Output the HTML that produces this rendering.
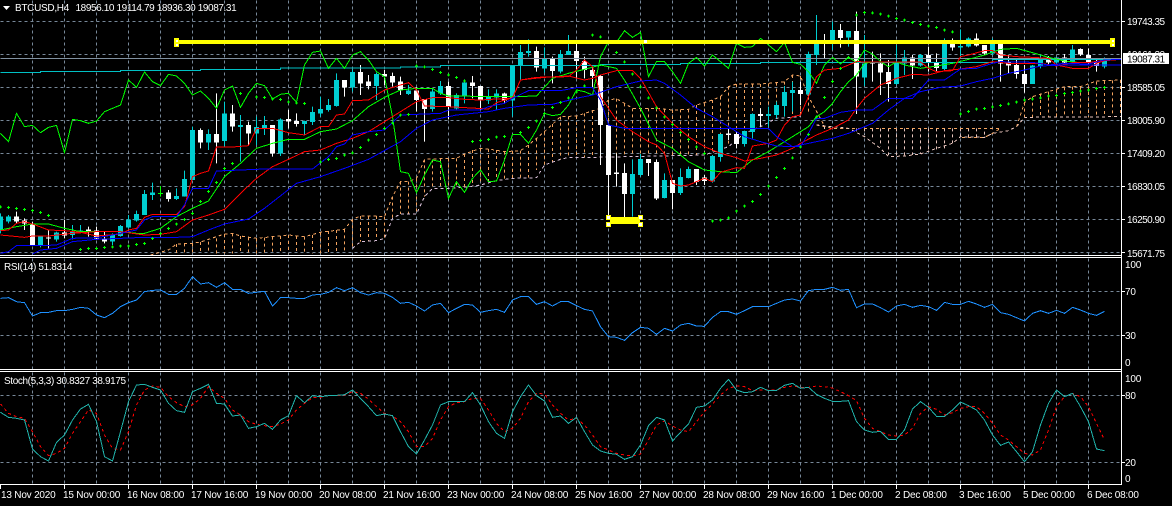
<!DOCTYPE html>
<html><head><meta charset="utf-8"><style>
html,body{margin:0;padding:0;background:#000;width:1172px;height:506px;overflow:hidden}
svg{display:block}
text{font-family:"Liberation Sans",sans-serif;font-size:10px;fill:#fff;letter-spacing:-.2px}
.l{fill:none;stroke-width:1;vector-effect:non-scaling-stroke;stroke-linejoin:miter;shape-rendering:crispEdges}
.c{shape-rendering:crispEdges}
path.c{fill:none}
.p text{letter-spacing:-.52px}
</style></head><body>
<svg width="1172" height="506" viewBox="0 0 1172 506" xmlns="http://www.w3.org/2000/svg">
<rect width="1172" height="506" fill="#000"/>
<!-- grid -->
<g class="c" fill="none" stroke="#778899" stroke-dasharray="3 3" transform="translate(.5,.5)">
<path d="M32 0V255M64 0V255M96 0V255M128 0V255M160 0V255M192 0V255M224 0V255M256 0V255M288 0V255M320 0V255M352 0V255M384 0V255M416 0V255M448 0V255M480 0V255M512 0V255M544 0V255M576 0V255M608 0V255M640 0V255M672 0V255M704 0V255M736 0V255M768 0V255M800 0V255M832 0V255M864 0V255M896 0V255M928 0V255M960 0V255M992 0V255M1024 0V255M1056 0V255M1088 0V255"/>
<path d="M32 258V369M64 258V369M96 258V369M128 258V369M160 258V369M192 258V369M224 258V369M256 258V369M288 258V369M320 258V369M352 258V369M384 258V369M416 258V369M448 258V369M480 258V369M512 258V369M544 258V369M576 258V369M608 258V369M640 258V369M672 258V369M704 258V369M736 258V369M768 258V369M800 258V369M832 258V369M864 258V369M896 258V369M928 258V369M960 258V369M992 258V369M1024 258V369M1056 258V369M1088 258V369"/>
<path d="M32 372V484M64 372V484M96 372V484M128 372V484M160 372V484M192 372V484M224 372V484M256 372V484M288 372V484M320 372V484M352 372V484M384 372V484M416 372V484M448 372V484M480 372V484M512 372V484M544 372V484M576 372V484M608 372V484M640 372V484M672 372V484M704 372V484M736 372V484M768 372V484M800 372V484M832 372V484M864 372V484M896 372V484M928 372V484M960 372V484M992 372V484M1024 372V484M1056 372V484M1088 372V484"/>
<path d="M0 21H1121M0 54H1121M0 87H1121M0 120H1121M0 153H1121M0 186H1121M0 219H1121M0 252H1121M0 291H1121M0 335H1121M0 395H1121M0 462H1121"/>
</g>
<svg x="0" y="0" width="1121" height="255" viewBox="0 0 1121 255" style="overflow:hidden">
<g transform="translate(.5,0) scale(1,.33333)">
<!-- cloud verticals -->
<path class="c" stroke="#f4a460" stroke-width="1" stroke-dasharray="9 9" d="M176 732V760M184 730V760M192 730V760M200 726V760M208 725V760M216 715V760M224 702V760M232 700V760M240 708V760M248 712V760M256 715V760M264 713V760M272 710V760M280 708V760M288 705V760M296 708V760M304 710V760M312 705V760M320 697V760M328 693V760M336 690V760M344 688V760M352 658V745M360 648V725M368 648V724M376 648V722M384 650V715M392 590V655M400 545V642M408 545V642M416 535V642M424 478V590M432 478V565M440 477V565M448 476V565M456 475V564M464 462V562M472 450V555M480 445V552M488 447V545M496 450V540M504 455V536M512 453V535M520 452V533M528 435V533M536 415V510M544 395V495M552 372V487M560 350V478M568 349V472M576 348V472M584 340V472M592 330V472M600 325V472M608 300V472M616 296V471M624 310V470M632 325V470M640 325V468M648 325V468M656 325V468M664 328V467M672 330V467M680 328V466M688 328V465M696 315V465M704 310V465M712 300V455M720 290V450M728 260V440M736 252V400M744 252V390M752 252V380M760 252V372M768 250V365M776 248V355M784 245V352M792 225V352M800 228V350M808 290V340M1024 308V352M1032 290V352M1040 282V352M1048 275V352M1056 268V352M1064 262V352M1072 260V352M1080 260V352M1088 258V352M1096 245V352M1104 243V352M1112 241V350M1120 240V350"/>
<path class="c" stroke="#e8c4bc" stroke-width="1" stroke-dasharray="9 9" d="M824 378V387M856 385V395M864 385V405M872 385V420M880 385V440M888 385V465M896 385V470M904 385V470M912 385V465M920 385V462M928 385V455M936 385V448M944 385V445M952 385V430M960 385V412M968 385V412M976 385V412M984 395V412"/>
<!-- cloud spans -->
<polyline class="l" stroke="#f4a460" stroke-dasharray="3 3" points="150,765 168,750 176,732 192,730 200,726 224,702 232,700 240,708 256,715 272,710 288,705 304,710 320,697 344,688 352,658 360,648 376,648 384,650 392,590 400,545 408,545 416,535 424,478 448,475 456,475 464,462 480,445 488,447 504,455 520,452 528,435 544,395 560,350 576,348 600,325 608,300 616,296 624,310 632,325 656,325 672,330 688,328 696,315 712,300 720,290 728,260 736,252 760,252 776,248 784,245 792,225 800,228 808,290 824,378"/>
<polyline class="l" stroke="#d8bfd8" stroke-dasharray="3 3" points="352,745 360,725 376,722 384,715 392,655 400,642 416,642 424,590 432,565 448,565 464,562 480,555 496,542 512,535 536,533 544,495 560,478 568,472 592,472 624,470 704,465 728,440 744,400 760,380 776,355 800,350"/>
<polyline class="l" stroke="#f4a460" stroke-dasharray="3 3" points="816,375 832,385 1000,385 992,400 984,412 960,412"/>
<polyline class="l" stroke="#e8c4bc" stroke-dasharray="3 3" points="816,375 848,385 864,410 880,445 888,470 904,468 920,462 936,445 952,430 960,410 984,412 992,400 1008,392 1016,380 1024,352 1121,350"/>
<polyline class="l" stroke="#f4a460" stroke-dasharray="3 3" points="1016,380 1024,308 1032,290 1048,275 1064,260 1080,260 1096,243 1121,240"/>
<!-- wicks -->
<path class="c" stroke="#00ced1" stroke-width="1" d="M0 640V700M8 645V670M40 710V742M56 695V725M72 675V718M80 675V700M112 700V735M120 675V710M128 645V685M136 632V665M144 570V645M152 548V600M176 565V600M184 512V590M192 380V540M208 388V450M224 305V440M240 345V485M256 350V435M264 348V405M280 355V468M304 362V405M312 320V375M320 290V350M328 297V335M336 220V320M352 208V275M376 218V300M408 255V285M432 265V335M440 243V285M456 280V328M464 238V310M488 268V312M496 268V328M512 195V350M520 135V240M528 118V170M544 142V218M560 150V220M568 105V165M632 478V650M640 462V530M664 520V595M680 505V585M688 500V535M712 465V548M720 402V485M744 392V440M752 340V415M768 320V380M776 305V355M784 258V350M792 245V335M808 155V285M816 45V195M832 65V150M848 93V140M864 105V258M896 135V255M904 150V225M920 162V200M944 115V210M960 88V175M968 112V142M992 115V165M1032 195V252M1040 165V205M1056 172V195M1072 135V190M1104 172V205"/>
<path class="c" stroke="#fff" stroke-width="1" d="M16 635V670M24 655V690M32 665V735M48 690V745M64 660V715M88 680V710M96 680V720M104 695V730M168 570V605M200 385V445M216 280V490M232 315V395M248 365V435M272 375V470M288 330V385M296 340V380M344 240V290M360 195V285M368 225V268M384 210V255M392 218V260M400 230V285M416 262V335M424 297V425M448 245V358M472 228V295M480 258V328M504 278V308M536 140V215M552 170V250M576 125V235M584 170V235M592 200V262M600 225V495M608 375V650M616 460V560M624 490V662M648 477V528M656 478V600M672 540V628M696 507V555M704 525V555M728 385V420M736 395V445M760 325V380M800 245V315M824 102V175M840 72V143M856 35V342M872 155V245M880 160V285M888 180V305M912 165V237M928 140V215M936 160V215M952 115V152M976 100V140M984 135V165M1000 127V245M1008 165V222M1016 180V236M1024 195V278M1048 168V198M1064 162V190M1080 145V168M1088 145V195M1096 180V215"/>
<path d="M160 558V590" stroke="#00ff00" stroke-width="1" class="c"/>
<!-- bodies -->
<path class="c" stroke="#00ced1" stroke-width="5" d="M0 650V690M8 650V665M40 710V735M56 698V718M72 695V705M80 692V698M112 705V725M120 678V708M128 658V682M136 642V662M144 582V645M152 578V585M176 588V597M184 537V590M192 390V540M208 402V427M224 340V423M240 375V381M256 381V400M264 375V384M280 358V460M304 363V372M312 336V366M320 327V340M328 315V330M336 240V318M352 216V262M376 222V258M408 272V282M432 275V327M440 258V280M456 285V325M464 248V288M488 290V302M496 280V292M512 195V302M520 156V195M528 153V159M544 175V205M560 162V215M568 153V165M632 522V582M640 477V525M664 540V594M680 531V579M688 507V534M712 468V545M720 402V471M744 393V432M752 342V396M768 342V348M776 315V345M784 276V318M792 270V279M808 162V283M816 125V165M832 90V130M848 93V112M864 190V232M896 187V252M904 172V190M920 165V196M944 130V207M960 138V143M968 115V140M992 127V160M1032 196V252M1040 172V198M1056 172V188M1072 148V186M1104 178V200"/>
<path class="c" stroke="#fff" stroke-width="5" d="M16 650V665M24 662V670M32 672V735M48 712V716M64 698V706M88 688V695M96 692V715M104 718V725M168 578V597M200 390V427M216 402V427M232 340V380M248 375V400M272 375V460M288 357V364M296 363V372M344 240V262M360 216V250M368 245V258M384 222V230M392 228V248M400 245V270M416 272V300M424 297V327M448 258V320M472 248V258M480 258V302M504 280V302M536 153V203M552 175V213M576 153V183M584 183V210M592 210V228M600 228V375M608 375V525M616 518V522M624 519V582M648 477V489M656 486V596M672 540V579M696 507V546M704 533V543M728 401V405M736 402V432M760 342V348M800 270V282M824 125V130M840 90V114M856 93V230M872 190V192M880 190V218M888 216V252M912 172V197M928 165V188M936 186V204M952 130V143M976 115V137M984 135V160M1000 127V190M1008 186V196M1016 195V222M1024 222V252M1048 172V188M1064 172V188M1080 147V163M1088 165V188M1096 188V198"/>
<path class="c" stroke="#00ff00" stroke-width="5" d="M160 579V582"/>
<!-- cyan / grey -->
<path class="l c" stroke="#00c0c4" d="M0 217H40V214H120V211H200V208H280V204H400V201H440V197H600V193H680V190H760V187H992V179H1121"/>
<path class="l c" stroke="#8090a0" d="M0 175H1121"/>
<!-- lines -->
<polyline class="l" stroke="#00ff00" points="0,400 8,425 16,340 24,380 32,376 40,398 48,382 56,376 64,458 72,358 80,362 88,370 96,363 104,335 112,325 120,315 128,240 136,262 144,216 152,245 160,257 168,223 176,228 184,250 192,285 200,273 208,295 216,325 224,270 232,258 240,322 248,280 256,250 264,257 272,297 280,283 288,280 296,307 304,195 312,157 320,153 328,205 336,175 344,205 352,165 360,155 368,180 376,215 384,230 392,350 400,515 408,520 416,578 424,525 432,480 440,485 448,595 456,545 464,577 472,535 480,510 488,545 496,543 504,480 512,403 520,403 528,430 536,390 544,340 552,347 560,343 568,315 576,270 584,275 592,285 600,170 608,125 616,127 624,92 632,112 640,97 648,230 656,185 664,185 672,215 680,250 688,190 696,172 704,198 712,165 720,185 728,205 736,130 744,142 752,140 760,115 768,135 776,155 784,127 792,187 800,193 808,215 816,250 824,195 832,172 840,192 848,172 856,187 864,150 872,162 880,185 888,200 896,185"/>
<polyline class="l" stroke="#00ff00" points="0,690 16,680 32,672 48,672 64,685 80,695 96,695 120,695 136,700 144,700 160,685 176,650 192,625 208,603 224,530 240,490 256,445 272,430 288,418 304,418 320,395 336,387 352,362 368,320 384,292 400,270 416,265 432,265 440,280 448,288 464,288 480,290 496,290 512,290 536,288 552,235 568,220 584,208 600,195 616,205 624,240 640,325 656,420 672,445 688,485 704,510 720,515 736,518 752,480 768,455 784,425 800,395 808,380 816,350 824,335 832,310 840,275 848,245 856,225 864,190 872,186 896,186 904,195 920,205 936,198 952,190 968,178 984,165 1000,148 1016,145 1032,158 1048,172 1064,183 1080,188 1096,186 1104,180 1121,178"/>
<polyline class="l" stroke="#ff0000" points="0,705 24,712 32,708 48,708 72,700 96,695 120,695 144,705 160,703 176,695 192,660 208,645 224,628 240,580 256,535 272,500 288,478 304,455 320,450 336,430 352,415 368,395 384,365 400,335 416,305 432,293 448,293 464,298 480,300 496,297 512,295 520,240 544,232 568,228 584,240 592,235 600,225 616,212 632,212 640,235 656,320 672,370 688,410 704,440 720,460 736,473 744,483 760,475 776,465 792,445 800,430 816,405 832,385 848,360 856,325 864,295 880,255 896,235 912,223 928,225 944,212 960,207 976,200 992,185 1008,190 1024,190 1040,190 1056,198 1072,188 1088,188 1104,180 1121,178"/>
<polyline class="l" stroke="#ff0000" points="0,692 8,690 16,670 24,665 32,672 48,690 64,692 80,697 96,708 120,702 128,690 136,685 144,652 152,643 176,643 184,620 192,530 200,520 208,513 216,441 232,441 248,437 256,385 272,385 288,398 304,405 320,380 328,380 336,345 344,342 352,302 368,300 384,270 400,255 408,248 416,270 424,318 448,320 488,327 496,308 512,293 520,240 536,232 568,230 576,210 584,180 592,200 596,240 600,290 616,360 632,395 648,425 656,435 664,460 672,550 680,558 688,555 704,535 712,545 720,517 736,503 744,505 752,438 768,430 776,420 784,375 792,350 800,345 808,290 816,230 824,210 840,205 856,185 872,186 920,186 928,205 936,215 952,212 960,170 968,165 984,152 992,152 1000,165 1016,170 1032,172 1048,175 1056,195 1072,205 1088,205 1096,190 1104,182 1121,178"/>
<polyline class="l" stroke="#0000ff" points="0,760 8,755 16,737 40,737 56,735 72,715 96,713 112,705 128,695 136,690 144,660 152,650 176,650 184,615 192,565 208,565 216,513 264,507 312,507 328,470 336,440 344,432 352,405 368,395 384,390 400,345 440,340 448,330 480,330 488,320 504,310 512,295 528,272 560,272 576,263 592,263 600,300 608,375 624,385 768,385 776,410 784,425 792,440 800,440 808,400 816,355 824,355 840,337 856,330 872,330 888,295 912,295 928,240 944,240 960,207 976,205 992,190 1000,185 1032,187 1048,195 1064,190 1088,192 1104,180 1121,178"/>
<polyline class="l" stroke="#0000ff" points="32,762 40,750 56,745 72,725 96,718 144,712 176,712 192,710 208,690 224,672 248,657 264,625 296,550 320,530 344,505 368,478 400,425 416,385 432,360 456,345 488,335 504,325 528,315 552,313 576,295 592,285 616,260 640,243 656,240 664,250 680,285 696,325 712,350 728,380 744,410 760,425 776,438 792,440 808,430 832,415 848,400 872,370 888,330 904,295 920,275 940,262 960,258 976,245 992,235 1008,220 1024,210 1040,198 1064,195 1088,195 1121,195"/>
<!-- SAR dots: plus shapes (vertical bar + centre horizontal bar) -->
<path id="sar" class="c" stroke="#00ff00" stroke-width="1" d="M0 616v9M8 618v9M16 621v9M24 624v9M32 627v9M40 633v9M48 642v9M80 744v9M88 741v9M96 741v9M104 738v9M112 736v9M120 734v9M128 734v9M136 729v9M144 726v9M152 711v9M160 696v9M168 681v9M176 668v9M184 654v9M192 636v9M200 600v9M208 570v9M216 543v9M224 501v9M232 486v9M240 276v9M256 286v9M264 288v9M272 293v9M280 294v9M288 301v9M296 304v9M304 306v9M320 481v9M328 474v9M336 471v9M344 461v9M352 454v9M360 438v9M368 416v9M376 399v9M384 381v9M392 364v9M400 341v9M408 339v9M416 193v9M424 196v9M432 204v9M440 213v9M448 220v9M456 228v9M464 238v9M472 420v9M480 417v9M488 414v9M496 407v9M504 405v9M520 393v9M528 378v9M536 359v9M544 336v9M552 318v9M560 303v9M568 289v9M576 271v9M584 253v9M592 101v9M600 106v9M608 121v9M616 153v9M624 181v9M632 218v9M640 256v9M648 289v9M656 319v9M664 346v9M672 369v9M680 393v9M688 414v9M696 436v9M704 456v9M712 659v9M720 656v9M728 649v9M736 629v9M744 614v9M752 600v9M760 579v9M768 554v9M776 528v9M784 501v9M792 469v9M800 436v9M808 399v9M816 346v9M824 288v9M832 240v9M840 201v9M848 168v9M856 41v9M864 33v9M872 34v9M880 38v9M888 44v9M896 51v9M904 56v9M912 63v9M920 69v9M928 74v9M936 78v9M944 86v9M952 91v9M960 337v9M968 330v9M976 323v9M984 321v9M992 316v9M1000 312v9M1008 307v9M1016 302v9M1024 296v9M1032 293v9M1040 289v9M1048 284v9M1056 282v9M1064 276v9M1072 273v9M1080 269v9M1088 266v9M1096 261v9M1104 258v9"/>
<g stroke="#00ff00" stroke-width="3" stroke-dasharray="0 3 3 3" fill="none" class="c"><path d="M0 616v9M8 618v9M16 621v9M24 624v9M32 627v9M40 633v9M48 642v9M80 744v9M88 741v9M96 741v9M104 738v9M112 736v9M120 734v9M128 734v9M136 729v9M144 726v9M152 711v9M160 696v9M168 681v9M176 668v9M184 654v9M192 636v9M200 600v9M208 570v9M216 543v9M224 501v9M232 486v9M240 276v9M256 286v9M264 288v9M272 293v9M280 294v9M288 301v9M296 304v9M304 306v9M320 481v9M328 474v9M336 471v9M344 461v9M352 454v9M360 438v9M368 416v9M376 399v9M384 381v9M392 364v9M400 341v9M408 339v9M416 193v9M424 196v9M432 204v9M440 213v9M448 220v9M456 228v9M464 238v9M472 420v9M480 417v9M488 414v9M496 407v9M504 405v9M520 393v9M528 378v9M536 359v9M544 336v9M552 318v9M560 303v9M568 289v9M576 271v9M584 253v9M592 101v9M600 106v9M608 121v9M616 153v9M624 181v9M632 218v9M640 256v9M648 289v9M656 319v9M664 346v9M672 369v9M680 393v9M688 414v9M696 436v9M704 456v9M712 659v9M720 656v9M728 649v9M736 629v9M744 614v9M752 600v9M760 579v9M768 554v9M776 528v9M784 501v9M792 469v9M800 436v9M808 399v9M816 346v9M824 288v9M832 240v9M840 201v9M848 168v9M856 41v9M864 33v9M872 34v9M880 38v9M888 44v9M896 51v9M904 56v9M912 63v9M920 69v9M928 74v9M936 78v9M944 86v9M952 91v9M960 337v9M968 330v9M976 323v9M984 321v9M992 316v9M1000 312v9M1008 307v9M1016 302v9M1024 296v9M1032 293v9M1040 289v9M1048 284v9M1056 282v9M1064 276v9M1072 273v9M1080 269v9M1088 266v9M1096 261v9M1104 258v9"/></g>
</g>
</svg>
<!-- yellow objects -->
<g class="c">
<rect x="176" y="40" width="936" height="4" fill="#ffff00"/>
<rect x="174" y="38" width="5" height="9" fill="#ffff00"/>
<rect x="176" y="40" width="2" height="2" fill="#fff"/>
<rect x="176" y="44" width="2" height="2" fill="#fff"/>
<rect x="1110" y="38" width="5" height="9" fill="#ffff00"/>
<rect x="1112" y="40" width="2" height="2" fill="#fff"/>
<rect x="1112" y="44" width="2" height="2" fill="#fff"/>
<rect x="644" y="40" width="3" height="3" fill="#fff"/>
<rect x="610" y="217" width="30" height="7" fill="#ffff00"/>
<rect x="606" y="215" width="5" height="5" fill="#ffff00"/><rect x="607" y="216" width="3" height="3" fill="#fff"/>
<rect x="638" y="215" width="5" height="5" fill="#ffff00"/><rect x="639" y="216" width="3" height="3" fill="#fff"/>
<rect x="606" y="222" width="5" height="5" fill="#ffff00"/><rect x="607" y="223" width="3" height="3" fill="#fff"/>
<rect x="638" y="222" width="5" height="5" fill="#ffff00"/><rect x="639" y="223" width="3" height="3" fill="#fff"/>
</g>
<!-- RSI -->
<g transform="translate(.5,250) scale(1,.33333)">
<polyline class="l" stroke="#1e90ff" points="0,145 8,143 16,155 24,158 32,198 40,188 48,187 56,182 64,182 72,178 80,172 88,175 96,195 104,203 112,190 120,170 128,158 136,150 144,125 152,121 160,120 168,133 176,133 184,115 192,80 200,102 208,98 216,112 224,98 232,118 240,118 248,130 256,127 264,124 272,168 280,143 288,143 296,145 304,145 312,135 320,133 328,127 336,113 344,122 352,113 360,128 368,135 376,128 384,130 392,142 400,160 408,157 416,168 424,183 432,165 440,160 448,188 456,175 464,163 472,165 480,187 488,182 496,178 504,187 512,150 520,140 528,140 536,163 544,155 552,168 560,155 568,155 576,167 584,178 592,183 600,230 608,260 616,262 624,271 632,248 640,232 648,235 656,253 664,235 672,243 680,225 688,220 696,228 704,229 712,202 720,185 728,185 736,193 744,182 752,170 760,170 768,170 776,160 784,150 792,147 800,153 808,122 816,118 824,118 832,112 840,121 848,118 856,173 864,162 872,162 880,173 888,186 896,168 904,163 912,172 920,166 928,170 936,181 944,157 952,163 960,163 968,154 976,162 984,172 992,163 1000,188 1008,193 1016,203 1024,213 1032,190 1040,182 1048,190 1056,181 1064,190 1072,172 1080,180 1088,190 1096,196 1104,184"/>
<!-- Stoch -->
<polyline class="l" stroke="#ff0000" stroke-dasharray="3 3" points="0,462 8,490 16,500 24,505 32,545 40,590 48,617 56,610 64,595 72,550 80,515 88,480 96,490 104,555 112,595 120,600 128,545 136,465 144,420 152,408 160,412 168,440 176,458 184,470 192,465 200,445 208,410 216,430 224,445 232,480 240,495 248,515 256,523 264,527 272,530 280,522 288,510 296,480 304,460 312,443 320,442 328,437 336,437 344,435 352,425 360,430 368,447 376,470 384,490 392,498 400,515 408,545 416,590 424,590 432,565 440,510 448,470 456,458 464,455 472,445 480,445 488,480 496,520 504,545 512,535 520,505 528,455 536,430 544,432 552,465 560,490 568,510 576,505 584,525 592,555 600,590 608,600 616,610 624,615 632,618 640,612 648,570 656,525 664,513 672,528 680,540 688,545 696,515 704,485 712,462 720,435 728,415 736,408 744,410 752,422 760,420 768,420 776,420 784,412 792,408 800,412 808,412 816,408 824,410 832,414 840,425 848,437 856,452 864,505 872,535 880,545 888,555 896,558 904,555 912,535 920,490 928,470 936,478 944,495 952,488 960,475 968,470 976,470 984,490 992,520 1000,555 1008,570 1016,590 1024,610 1032,615 1040,600 1048,540 1056,470 1064,440 1072,430 1080,440 1088,470 1096,520 1104,570"/>
<polyline class="l" stroke="#20b2aa" points="0,487 8,502 16,505 24,510 32,597 40,620 48,633 56,577 64,555 72,510 80,477 88,463 96,515 104,620 112,633 120,545 128,455 136,405 144,403 152,412 160,420 168,460 176,482 184,487 192,425 200,415 208,403 216,460 224,462 232,498 240,495 248,535 256,530 264,520 272,538 280,510 288,497 296,437 304,458 312,437 320,440 328,437 336,436 344,434 352,420 360,445 368,470 376,497 384,492 392,497 400,545 408,590 416,612 424,570 432,525 440,465 448,455 456,455 464,455 472,428 480,465 488,515 496,550 504,565 512,485 520,440 528,405 536,437 544,453 552,502 560,498 568,520 576,502 584,545 592,585 600,603 608,610 616,613 624,628 632,620 640,585 648,527 656,502 664,510 672,573 680,547 688,522 696,472 704,468 712,450 720,415 728,388 736,420 744,428 752,425 760,412 768,422 776,421 784,406 792,400 800,415 808,412 816,433 824,445 832,454 840,454 848,452 856,515 864,540 872,547 880,544 888,568 896,568 904,540 912,477 920,455 928,472 936,499 944,499 952,480 960,456 968,467 976,480 984,510 992,555 1000,586 1008,576 1016,605 1024,635 1032,605 1040,525 1048,460 1056,420 1064,440 1072,430 1080,470 1088,515 1096,597 1104,602"/>
</g>
<!-- frames -->
<g class="c" fill="#fff">
<rect x="0" y="255" width="1122" height="1"/>
<rect x="0" y="257" width="1122" height="1"/>
<rect x="0" y="369" width="1122" height="1"/>
<rect x="0" y="371" width="1122" height="1"/>
<rect x="0" y="484" width="1122" height="1"/>
<rect x="1121" y="0" width="1" height="485"/>
<path d="M0 485h1v4h-1zM64 485h1v4h-1zM128 485h1v4h-1zM192 485h1v4h-1zM256 485h1v4h-1zM320 485h1v4h-1zM384 485h1v4h-1zM448 485h1v4h-1zM512 485h1v4h-1zM576 485h1v4h-1zM640 485h1v4h-1zM704 485h1v4h-1zM768 485h1v4h-1zM832 485h1v4h-1zM896 485h1v4h-1zM960 485h1v4h-1zM1024 485h1v4h-1zM1088 485h1v4h-1zM1122 21h3v1h-3zM1122 87h3v1h-3zM1122 120h3v1h-3zM1122 153h3v1h-3zM1122 186h3v1h-3zM1122 219h3v1h-3zM1122 252h3v1h-3zM1122 291h3v1h-3zM1122 335h3v1h-3zM1122 395h3v1h-3zM1122 462h3v1h-3z"/>
</g>
<!-- header -->
<path d="M3 6H10L6.5 10Z" fill="#fff"/>
<text x="15" y="11" style="letter-spacing:-.3px">BTCUSD,H4</text>
<text x="75.5" y="11" style="letter-spacing:-.39px">18956.10 19114.79 18936.30 19087.31</text>
<text x="4" y="270" style="letter-spacing:-.35px">RSI(14) 51.8314</text>
<text x="4" y="384" style="letter-spacing:-.38px">Stoch(5,3,3) 30.8327 38.9175</text>
<!-- price axis -->
<g class="p">
<text x="1127" y="25">19743.35</text>
<text x="1127" y="58">19161.20</text>
<text x="1127" y="91">18585.05</text>
<text x="1127" y="124">18005.90</text>
<text x="1127" y="157">17409.20</text>
<text x="1127" y="190">16830.05</text>
<text x="1127" y="223">16250.90</text>
<text x="1127" y="257">15671.75</text>
</g>
<rect x="1123" y="53" width="46" height="11" fill="#fff" class="c"/>
<text x="1127" y="62.5" style="fill:#000;letter-spacing:-.52px">19087.31</text>
<text x="1125" y="268">100</text>
<text x="1125" y="295">70</text>
<text x="1125" y="339">30</text>
<text x="1125" y="366">0</text>
<text x="1125" y="382">100</text>
<text x="1125" y="399">80</text>
<text x="1125" y="466">20</text>
<text x="1125" y="482">0</text>
<!-- time axis -->
<g>
<text x="1" y="498">13 Nov 2020</text>
<text x="63" y="498">15 Nov 00:00</text>
<text x="127" y="498">16 Nov 08:00</text>
<text x="191" y="498">17 Nov 16:00</text>
<text x="255" y="498">19 Nov 00:00</text>
<text x="319" y="498">20 Nov 08:00</text>
<text x="383" y="498">21 Nov 16:00</text>
<text x="447" y="498">23 Nov 00:00</text>
<text x="511" y="498">24 Nov 08:00</text>
<text x="575" y="498">25 Nov 16:00</text>
<text x="639" y="498">27 Nov 00:00</text>
<text x="703" y="498">28 Nov 08:00</text>
<text x="767" y="498">29 Nov 16:00</text>
<text x="831" y="498">1 Dec 00:00</text>
<text x="895" y="498">2 Dec 08:00</text>
<text x="959" y="498">3 Dec 16:00</text>
<text x="1023" y="498">5 Dec 00:00</text>
<text x="1087" y="498">6 Dec 08:00</text>
</g>
</svg>
</body></html>
